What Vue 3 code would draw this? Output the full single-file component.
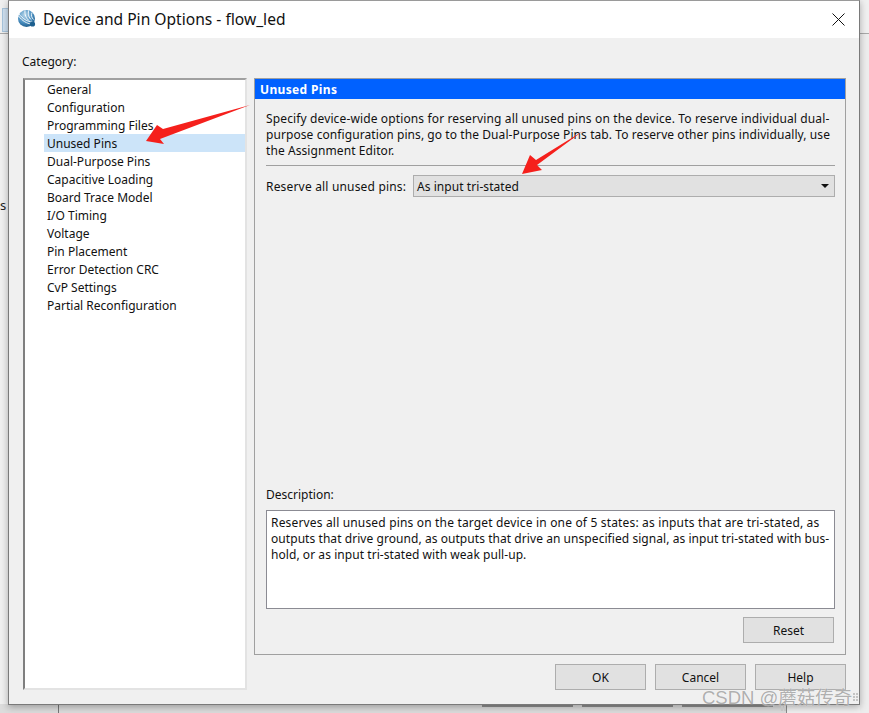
<script setup>
const categories = [
  'General', 'Configuration', 'Programming Files', 'Unused Pins', 'Dual-Purpose Pins',
  'Capacitive Loading', 'Board Trace Model', 'I/O Timing', 'Voltage', 'Pin Placement',
  'Error Detection CRC', 'CvP Settings', 'Partial Reconfiguration'
]
const ghostButtons = [482, 582, 682]
</script>

<template>
  <div class="screen">
    <div class="behind-tab"></div>
    <div class="behind-line"></div>
    <div class="behind-s">s</div>
    <div class="behind-bottom">
      <div class="behind-edge"></div>
      <div v-for="x in ghostButtons" :key="x" class="ghost-btn" :style="{ left: x + 'px' }"></div>
    </div>
    <div class="behind-right"></div>
    <div class="dialog">
      <header class="titlebar">
        <svg class="logo" width="20" height="20" viewBox="0 0 20 20">
          <defs>
            <radialGradient id="globe" cx="0.4" cy="0.3" r="0.8">
              <stop offset="0" stop-color="#b7d6ea" />
              <stop offset="0.55" stop-color="#4a8fc0" />
              <stop offset="1" stop-color="#134f7e" />
            </radialGradient>
          </defs>
          <circle cx="9.500" cy="9.500" r="8.500" fill="url(#globe)" />
          <path d="M1.500 7c4 5 8 7.500 13 8M1.500 4.500c4 5 9 8.500 14 8.500M8 1.500c-.5 4 1 8 4.500 10.500M11.500 1.500c-.5 4 0 7 3 9.500M15 3.500c-1 3-.5 5 1.500 7" fill="none" stroke="#fff" stroke-width=".9" />
          <circle cx="15.500" cy="15" r="2.600" fill="#1c5f8f" />
        </svg>
        <span class="title">Device and Pin Options - flow_led</span>
        <svg class="close" width="13" height="13" viewBox="0 0 13 13">
          <path d="M.5.5l12 12M12.500.5l-12 12" stroke="#111" stroke-width="1" fill="none" />
        </svg>
      </header>
      <div class="content">
        <div class="category-label">Category:</div>
        <div class="columns">
          <ul class="tree">
            <li v-for="c in categories" :key="c" :class="{ selected: c === 'Unused Pins' }">{{ c }}</li>
          </ul>
          <section class="panel">
            <h2 class="panel-title">Unused Pins</h2>
            <div class="panel-body">
              <p class="intro"><span class="wide">Specify device-wide options for reserving all unused pins on the device. To reserve individual dual-</span><br>purpose configuration pins, go to the Dual-Purpose Pins tab. To reserve other pins individually, use<br>the Assignment Editor.</p>
              <hr class="rule">
              <div class="reserve-row">
                <span class="reserve-label">Reserve all unused pins:</span>
                <div class="select">
                  <span>As input tri-stated</span>
                  <svg width="8" height="4" viewBox="0 0 8 4"><path d="M0 0h8L4 4z" fill="#111" /></svg>
                </div>
              </div>
              <div class="spacer"></div>
              <div class="desc-label">Description:</div>
              <div class="desc"><span class="wider">Reserves all unused pins on the target device in one of 5 states: as inputs that are tri-stated, as</span><br>outputs that drive ground, as outputs that drive an unspecified signal, as input tri-stated with bus-<br>hold, or as input tri-stated with weak pull-up.</div>
              <div class="reset-row"><button class="btn">Reset</button></div>
            </div>
          </section>
        </div>
        <div class="actions">
          <button class="btn">OK</button>
          <button class="btn">Cancel</button>
          <button class="btn">Help</button>
        </div>
      </div>
    </div>
    <svg class="arrows" width="869" height="713" viewBox="0 0 869 713">
      <path d="M250 105L163 129L157 125L146 141L164 144L160 139Z" fill="#f5201c" />
      <path d="M583 131L536 160L530 155L522 174L542 170L537 165Z" fill="#f5201c" />
      <g fill="#c4c4c4">
        <rect x="853" y="693" width="2" height="2" /><rect x="856" y="693" width="2" height="2" />
        <rect x="853" y="696" width="2" height="2" /><rect x="856" y="696" width="2" height="2" />
        <rect x="853" y="699" width="2" height="2" /><rect x="856" y="699" width="2" height="2" />
        <rect x="781" y="706" width="2" height="2" /><rect x="784" y="706" width="2" height="2" />
        <rect x="781" y="709" width="2" height="2" /><rect x="784" y="709" width="2" height="2" />
      </g>
    </svg>
    <div class="watermark">CSDN @蘑菇传奇</div>
  </div>
</template>

<style>
html, body { margin: 0; background: #f0f0f0; }
</style>

<style scoped>
.screen {
  position: relative;
  width: 869px;
  height: 713px;
  overflow: hidden;
  background: #f0f0f0;
  font-family: "Noto Sans", "Open Sans", sans-serif;
  font-size: 12px;
  color: #111;
}
.behind-tab {
  position: absolute;
  left: 2px;
  top: 8px;
  width: 8px;
  height: 24px;
  background: #cfe0f0;
  border: 1px solid #a8c4dc;
  box-sizing: border-box;
}
.behind-line {
  position: absolute;
  left: 0;
  right: 0;
  top: 33px;
  height: 1px;
  background: #a9a9a9;
}
.behind-s {
  position: absolute;
  left: 0;
  top: 196px;
  color: #222;
  font-size: 13px;
}
.behind-right {
  position: absolute;
  left: 860px;
  right: 0;
  top: 34px;
  bottom: 0;
  background: #ededed;
}
.behind-bottom {
  position: absolute;
  left: 0;
  top: 704px;
  width: 787px;
  height: 9px;
  background: #dcdcdc;
}
.behind-edge {
  position: absolute;
  left: 58px;
  top: 0;
  bottom: 0;
  right: 0;
  border-left: 1px solid #777;
  border-right: 1px solid #8a8a8a;
}
.ghost-btn {
  position: absolute;
  top: 0;
  width: 91px;
  height: 3px;
  background: #8f8f8f;
}
.dialog {
  position: absolute;
  left: 8px;
  top: 0;
  width: 852px;
  height: 705px;
  box-sizing: border-box;
  background: #f0f0f0;
  border: 1px solid #7a7a7a;
  border-top-color: #9a9a9a;
  box-shadow: 0 2px 7px rgba(0, 0, 0, 0.3);
  display: flex;
  flex-direction: column;
}
.titlebar {
  height: 37px;
  flex: none;
  background: #fff;
  display: flex;
  align-items: center;
  padding: 0 14px 0 8px;
}
.logo { margin-right: 6px; margin-top: -1px; }
.title {
  font-size: 15.6px;
  flex: 1;
  color: #111;
  position: relative;
  top: -1px;
}
.content {
  flex: 1;
  min-height: 0;
  display: flex;
  flex-direction: column;
  padding: 16px 13px 14px 14px;
}
.category-label { height: 18px; line-height: 16px; margin: 0 0 6px -1px; }
.columns { display: flex; gap: 7px; align-items: flex-start; height: 577px; }
.tree {
  list-style: none;
  margin: 0;
  padding: 0 0 0 19px;
  width: 224px;
  height: 612px;
  flex: none;
  box-sizing: border-box;
  background: #fff;
  border: 2px solid #e3e3e3;
  border-top-color: #a0a0a0;
  border-left-color: #7f7f7f;
}
.tree li { height: 18px; line-height: 20px; padding-left: 3px; }
.tree li.selected { background: #cce4f9; }
.panel {
  flex: 1;
  min-width: 0;
  height: 577px;
  box-sizing: border-box;
  border: 1px solid #a0a0a0;
  display: flex;
  flex-direction: column;
}
.panel-title {
  margin: 0;
  height: 20px;
  line-height: 22px;
  padding-left: 5px;
  background: #0061ff;
  color: #fff;
  font-size: 12px;
  font-weight: 700;
  letter-spacing: 0.35px;
}
.panel-body {
  flex: 1;
  min-height: 0;
  display: flex;
  flex-direction: column;
  padding: 12px 10px 11px 11px;
}
.intro { margin: 0; line-height: 16px; white-space: nowrap; letter-spacing: 0.08px; }
.wide { letter-spacing: 0.13px; }
.rule { margin: 6px 0 0; border: 0; border-top: 1px solid #a0a0a0; }
.reserve-row { display: flex; align-items: center; margin-top: 9px; white-space: nowrap; }
.reserve-label { letter-spacing: 0.18px; }
.select {
  width: 422px;
  margin-left: auto;
  height: 22px;
  box-sizing: border-box;
  border: 1px solid #adadad;
  background: #e1e1e1;
  display: flex;
  align-items: center;
  justify-content: space-between;
  padding: 0 5px 0 3px;
  letter-spacing: 0.06px;
}
.spacer { flex: 1; }
.desc-label { height: 16px; line-height: 16px; margin-bottom: 7px; }
.desc {
  height: 99px;
  box-sizing: border-box;
  background: #fff;
  border: 1px solid #8b8b93;
  padding: 4px 4px;
  line-height: 16px;
  white-space: nowrap;
  letter-spacing: 0.06px;
}
.wider { letter-spacing: 0.17px; }
.reset-row { display: flex; justify-content: flex-end; margin: 8px 1px 0 0; }
.btn {
  width: 91px;
  height: 26px;
  box-sizing: border-box;
  border: 1px solid #adadad;
  background: #e1e1e1;
  font: inherit;
  color: #111;
  padding: 0;
}
.actions { display: flex; justify-content: flex-end; gap: 9px; margin-top: 9px; }
.arrows { position: absolute; left: 0; top: 0; pointer-events: none; }
.watermark {
  position: absolute;
  left: 702px;
  top: 683px;
  font-family: "Liberation Sans", "Noto Sans CJK SC", sans-serif;
  font-size: 18.500px;
  color: rgba(130, 130, 130, 0.65);
  text-shadow: 0 0 1px #fff;
  white-space: nowrap;
}
</style>
